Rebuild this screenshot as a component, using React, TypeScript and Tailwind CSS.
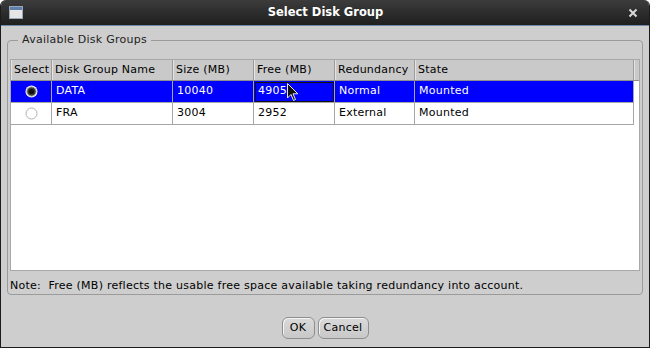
import React from "react";

interface DiskGroup {
  name: string;
  size: string;
  free: string;
  redundancy: string;
  state: string;
  selected: boolean;
}

const groups: DiskGroup[] = [
  { name: "DATA", size: "10040", free: "4905", redundancy: "Normal", state: "Mounted", selected: true },
  { name: "FRA", size: "3004", free: "2952", redundancy: "External", state: "Mounted", selected: false },
];

const cols = ["w-[41px]", "w-[121px]", "w-[81px]", "w-[81px]", "w-[80px]", "w-[219px]"];
const headers = ["Select", "Disk Group Name", "Size (MB)", "Free (MB)", "Redundancy", "State"];

function Radio({ on }: { on: boolean }) {
  return (
    <svg width="13" height="13" viewBox="0 0 13 13">
      {on ? (
        <>
          <circle cx="6.5" cy="6.5" r="6" fill="#ffffff" />
          <circle cx="6.5" cy="6.5" r="4.6" fill="#3a3a3a" stroke="#9a9a9a" strokeWidth="1" />
          <circle cx="6.5" cy="6.5" r="2.6" fill="#111111" />
        </>
      ) : (
        <circle cx="6.5" cy="6.5" r="5.5" fill="#ffffff" stroke="#b0b0b0" strokeWidth="1" />
      )}
    </svg>
  );
}

export default function App() {
  return (
    <div
      className="relative w-[650px] h-[350px] bg-white overflow-hidden text-[11px] tracking-[0.25px] text-black"
      style={{ fontFamily: '"DejaVu Sans", sans-serif' }}
    >
      <div className="w-full h-[348px] bg-[#cecece] border-x border-b border-[#1c1c1c] rounded-t-[6px] overflow-hidden flex flex-col">
        {/* title bar */}
        <div className="h-[26px] flex items-center bg-gradient-to-b from-[#3c3c3c] to-[#1f1f1f] border-b border-[#6d88aa] px-[8px]">
          <svg width="14" height="13" viewBox="0 0 14 13">
            <rect x="0.5" y="0.5" width="13" height="12" fill="#e6e6e6" stroke="#9aa7b8" />
            <rect x="1" y="1" width="12" height="3" fill="#5d7fae" />
          </svg>
          <div className="flex-1 text-center text-white font-bold text-[11.5px] tracking-normal">Select Disk Group</div>
          <svg width="10" height="10" viewBox="0 0 10 10" className="mr-[3px]">
            <path d="M1.5 1.5 L8.5 8.5 M8.5 1.5 L1.5 8.5" stroke="#d8d8d8" strokeWidth="2" />
          </svg>
        </div>

        {/* group box */}
        <fieldset className="ml-[6px] mt-[7px] w-[636px] border border-[#9b9b9b] rounded-[4px] px-[2px] pb-[1px]">
          <legend className="ml-[8px] px-[4px] leading-[14px] text-[#222]">Available Disk Groups</legend>
          <div className="mt-[12px] h-[212px] bg-white border border-[#a8a8a8] flex flex-col">
            <div className="flex h-[21px] bg-[#c9c9c9] border-b border-[#8f8f8f]">
              {headers.map((h, i) => (
                <div key={h} className={`${cols[i]} flex items-center pl-[2px] border-r border-[#9c9c9c] border-l border-l-[#e4e4e4]`}>
                  {h}
                </div>
              ))}
              <div className="flex-1 border-l border-l-[#e4e4e4]" />
            </div>
            {groups.map((g) => {
              const cells = [g.name, g.size, g.free, g.redundancy, g.state];
              return (
                <div key={g.name} className="flex h-[22px]">
                  <div className={`${cols[0]} flex items-center justify-center border-r border-b border-[#a6a6a6] ${g.selected ? "bg-[#0000ff]" : "bg-white"}`}>
                    <Radio on={g.selected} />
                  </div>
                  {cells.map((c, i) => (
                    <div
                      key={i}
                      className={`${cols[i + 1]} flex items-center pl-[4px] border-r border-b border-[#a6a6a6] ${
                        g.selected ? "bg-[#0000ff] text-white" : "bg-white"
                      } ${g.selected && i === 2 ? "outline outline-1 -outline-offset-2 outline-[#111]" : ""}`}
                    >
                      {c}
                    </div>
                  ))}
                </div>
              );
            })}
          </div>
          <div className="mt-[8px] leading-[14px]">
            Note:&nbsp; Free (MB) reflects the usable free space available taking redundancy into account.
          </div>
        </fieldset>

        {/* buttons */}
        <div className="flex justify-center gap-[3px] mt-[22px]">
          <button className="w-[33px] h-[22px] rounded-[6px] border border-[#8e8e8e] bg-gradient-to-b from-[#dadada] to-[#c8c8c8] shadow-[inset_1px_1px_0_#f4f4f4]">
            OK
          </button>
          <button className="w-[51px] h-[22px] rounded-[6px] border border-[#8e8e8e] bg-gradient-to-b from-[#dadada] to-[#c8c8c8] shadow-[inset_1px_1px_0_#f4f4f4]">
            Cancel
          </button>
        </div>
      </div>

      {/* mouse pointer */}
      <svg className="absolute left-[287px] top-[83px]" width="12" height="19" viewBox="0 0 12 19">
        <path d="M0.5 0.5 L0.5 15 L4 11.5 L6.5 17.5 L8.5 16.5 L6 10.8 L10.8 10.8 Z" fill="#111" stroke="#e8e8e8" strokeWidth="1" />
      </svg>
    </div>
  );
}
